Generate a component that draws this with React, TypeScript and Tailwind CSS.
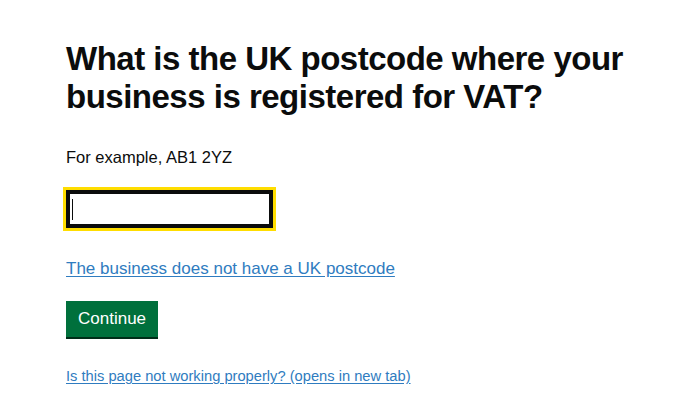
export default function App() {
  return (
    <div className="min-h-[402px] w-[688px] bg-white pl-[66px] pt-[40px] font-['Liberation_Sans',Arial,sans-serif] text-[#0b0c0c]">
      <h1 className="w-[590px] text-[33px] font-bold leading-[38px] tracking-[-0.5px]">
        What is the UK postcode where your business is registered for VAT?
      </h1>

      <p className="mt-[31px] text-[16.5px] leading-[20px] text-[#0b0c0c]">
        For example, AB1 2YZ
      </p>

      <div className="relative mt-[23px] w-[207px]">
        <input
          type="text"
          className="block h-[38px] w-[207px] border-2 border-[#0b0c0c] px-[4px] text-[17px] shadow-[inset_0_0_0_2px_#0b0c0c] outline-[3px] outline-[#ffdd00] outline-offset-0"
        />
        {/* caret */}
        <span className="absolute left-[6px] top-[9px] h-[21px] w-[1px] bg-[#0b0c0c]" />
      </div>

      <a
        href="#"
        className="mt-[31px] inline-block text-[17px] leading-[20px] text-[#2f7cc0] underline underline-offset-[2px]"
      >
        The business does not have a UK postcode
      </a>

      <div className="mt-[20px]">
        <button className="h-[36px] bg-[#00703c] px-[12px] text-[17px] leading-[20px] text-white shadow-[0_2px_0_#002d18]">
          Continue
        </button>
      </div>

      <a
        href="#"
        className="mt-[30px] inline-block text-[14.7px] leading-[18px] text-[#2f7cc0] underline underline-offset-[2px]"
      >
        Is this page not working properly? (opens in new tab)
      </a>
    </div>
  );
}
